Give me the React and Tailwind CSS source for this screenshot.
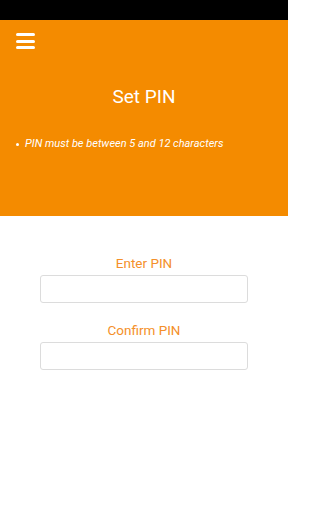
import React from "react";

const App = () => {
  return (
    <div className="w-[288px] h-[512px] bg-white flex flex-col font-['Roboto',sans-serif]">
      <div className="h-5 bg-black" />
      <div className="h-[196px] bg-[#f48b00] flex flex-col">
        <div className="pt-[13px] pl-4">
          <div className="w-[19px] flex flex-col gap-[3.5px]">
            <span className="h-[3px] rounded-full bg-white" />
            <span className="h-[3px] rounded-full bg-white" />
            <span className="h-[3px] rounded-full bg-white" />
          </div>
        </div>
        <h1 className="mt-[36px] text-center text-white text-[19px] leading-6">
          Set PIN
        </h1>
        <ul className="mt-[27px] pl-4 text-white text-[11px] italic leading-4">
          <li className="flex items-center">
            <span className="w-[3px] h-[3px] bg-white rounded-full mr-[6px]" />
            PIN must be between 5 and 12 characters
          </li>
        </ul>
      </div>
      <form className="px-10 pt-[39px] flex flex-col">
        <label className="text-center text-[#f4902a] text-[13.5px] leading-4 mb-[4px]">
          Enter PIN
        </label>
        <input
          type="password"
          className="h-[28px] w-full border border-[#dcdcdc] rounded-[3px] outline-none"
        />
        <label className="mt-[19px] text-center text-[#f4902a] text-[13.5px] leading-4 mb-[4px]">
          Confirm PIN
        </label>
        <input
          type="password"
          className="h-[28px] w-full border border-[#dcdcdc] rounded-[3px] outline-none"
        />
      </form>
    </div>
  );
};

export default App;
